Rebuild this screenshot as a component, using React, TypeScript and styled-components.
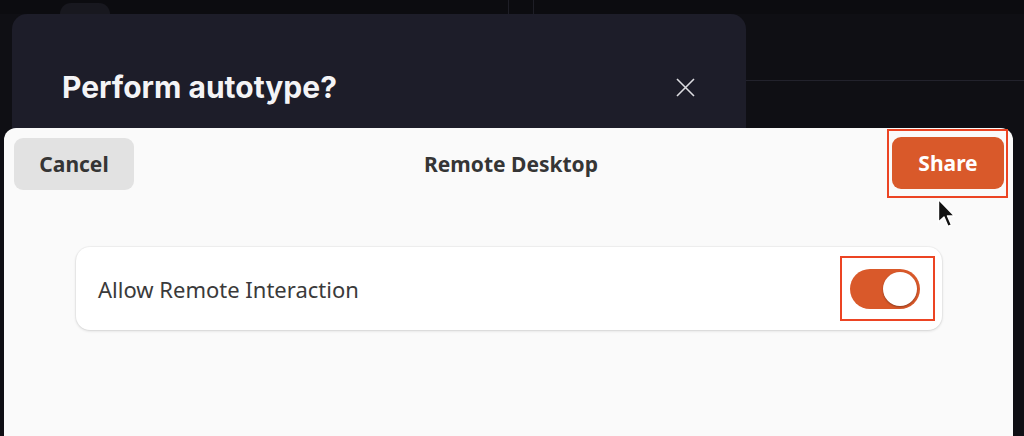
import React, { ReactElement, ReactNode } from 'react';
import styled, { createGlobalStyle } from 'styled-components';

const colors = {
  DESKTOP: '#0f0f14',
  STRIP: '#0c0c10',
  DIALOG: '#1d1d29',
  SHEET: '#fafafa',
  TEXT: '#353535',
  ORANGE: '#d9592a',
  MARK: '#ec4423',
};

const GlobalStyle = createGlobalStyle`
  html, body {
    margin: 0;
    padding: 0;
    background: ${colors.DESKTOP};
  }
  * {
    box-sizing: border-box;
  }
`;

const Screen = styled.div`
  width: 1024px;
  height: 436px;
  overflow: hidden;
  display: flex;
  flex-direction: column;
  background: ${colors.DESKTOP};
  font-family: 'Noto Sans', 'DejaVu Sans', sans-serif;
`;

const TopStrip = styled.div`
  height: 14px;
  flex-shrink: 0;
  display: flex;
  align-items: flex-end;
  background: ${colors.STRIP};
`;

const Tab = styled.div`
  margin-left: 60px;
  width: 50px;
  height: 11px;
  border-radius: 14px 14px 0 0;
  background: #18181f;
`;

const Rule = styled.div<{ $offset: number }>`
  margin-left: ${(p) => p.$offset}px;
  width: 1px;
  height: 14px;
  background: #1e1e26;
`;

const Backdrop = styled.div`
  height: 114px;
  flex-shrink: 0;
  display: flex;
  padding-left: 12px;
`;

// sits behind the share sheet, its lower part is covered
const AutotypeDialog = styled.div`
  width: 734px;
  height: 130px;
  flex-shrink: 0;
  border-radius: 15px 15px 0 0;
  background: ${colors.DIALOG};
  padding: 56px 51px 0 50px;
`;

const DialogHeader = styled.div`
  display: flex;
  align-items: center;
`;

const DialogTitle = styled.h2`
  margin: 0;
  flex: 1;
  color: #f4f4f6;
  font-family: Inter, 'Noto Sans', sans-serif;
  font-weight: 700;
  font-size: 30px;
  line-height: 34px;
`;

const CloseButton = styled.button`
  width: 20px;
  height: 20px;
  padding: 0;
  border: 0;
  background: none;
  display: flex;
  align-items: center;
  justify-content: center;
`;

const BackPane = styled.div`
  flex: 1;
  height: 67px;
  border-bottom: 1px solid #22222c;
`;

const Sheet = styled.div`
  position: relative;
  flex: 1;
  margin: 0 11px 0 4px;
  border-radius: 12px 12px 0 0;
  background: ${colors.SHEET};
  display: flex;
  flex-direction: column;
`;

const SheetHeader = styled.div`
  display: grid;
  grid-template-columns: 1fr auto 1fr;
  align-items: center;
  padding: 1px 5px 0 10px;
`;

const SheetTitle = styled.div`
  color: ${colors.TEXT};
  font-weight: 700;
  font-size: 21px;
`;

const HeaderButton = styled.button<{ $primary?: boolean }>`
  width: ${(p) => (p.$primary ? 112 : 120)}px;
  height: 52px;
  border: 0;
  border-radius: 9px;
  font-family: inherit;
  font-weight: 700;
  font-size: 21px;
  color: ${(p) => (p.$primary ? '#ffffff' : colors.TEXT)};
  background: ${(p) => (p.$primary ? colors.ORANGE : '#e2e2e2')};
`;

const Highlight = styled.div<{ $pad: string }>`
  display: flex;
  border: 2px solid ${colors.MARK};
  padding: ${(p) => p.$pad};
`;

const RightSlot = styled.div`
  justify-self: end;
`;

const Cursor = styled.svg`
  position: absolute;
  left: 933px;
  top: 70px;
`;

const SheetBody = styled.div`
  padding: 49px 71px 0 72px;
`;

const Card = styled.div`
  height: 83px;
  display: flex;
  align-items: center;
  padding: 0 7px 0 22px;
  border-radius: 14px;
  background: #ffffff;
  box-shadow: 0 1px 3px rgba(0, 0, 0, 0.14), 0 0 0 1px rgba(0, 0, 0, 0.03);
`;

const RowLabel = styled.div`
  flex: 1;
  color: #3a3a3a;
  font-size: 22px;
`;

const Track = styled.div<{ $on: boolean }>`
  width: 70px;
  height: 40px;
  padding: 3px;
  border-radius: 20px;
  display: flex;
  justify-content: ${(p) => (p.$on ? 'flex-end' : 'flex-start')};
  background: ${(p) => (p.$on ? colors.ORANGE : '#cfcfcf')};
`;

const Knob = styled.div`
  width: 34px;
  height: 34px;
  border-radius: 50%;
  background: #ffffff;
  box-shadow: 0 1px 2px rgba(0, 0, 0, 0.35);
`;

const Toggle = ({ on }: { on: boolean }): ReactElement => (
  <Track $on={on}>
    <Knob />
  </Track>
);

const Marked = ({ pad, children }: { pad: string; children: ReactNode }): ReactElement => (
  <Highlight $pad={pad}>{children}</Highlight>
);

const App = (): ReactElement => {
  return (
    <>
      <GlobalStyle />
      <Screen>
        <TopStrip>
          <Tab />
          <Rule $offset={398} />
          <Rule $offset={24} />
        </TopStrip>
        <Backdrop>
          <AutotypeDialog>
            <DialogHeader>
              <DialogTitle>Perform autotype?</DialogTitle>
              <CloseButton aria-label="Close">
                <svg width="19" height="19" viewBox="0 0 19 19">
                  <path d="M1 1 L18 18 M18 1 L1 18" stroke="#dcdce0" strokeWidth="1.6" fill="none" />
                </svg>
              </CloseButton>
            </DialogHeader>
          </AutotypeDialog>
          <BackPane />
        </Backdrop>
        <Sheet>
          <SheetHeader>
            <div>
              <HeaderButton>Cancel</HeaderButton>
            </div>
            <SheetTitle>Remote Desktop</SheetTitle>
            <RightSlot>
              <Marked pad="6px 2px 7px 3px">
                <HeaderButton $primary>Share</HeaderButton>
              </Marked>
            </RightSlot>
          </SheetHeader>
          <SheetBody>
            <Card>
              <RowLabel>Allow Remote Interaction</RowLabel>
              <Marked pad="11px 13px 10px 8px">
                <Toggle on />
              </Marked>
            </Card>
          </SheetBody>
          <Cursor width="22" height="32" viewBox="0 0 22 32">
            <path
              d="M1.5 1.5 L1.5 24 L7 19 L11 28.5 L14.5 27 L10.5 18 L17.5 18 Z"
              fill="#111"
              stroke="#fff"
              strokeWidth="1.4"
              strokeLinejoin="round"
            />
          </Cursor>
        </Sheet>
      </Screen>
    </>
  );
};

export default App;
